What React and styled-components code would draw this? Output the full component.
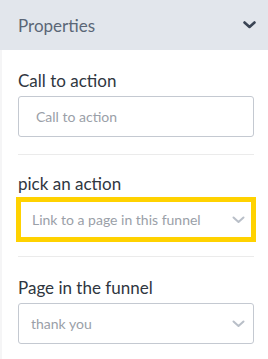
import React from "react";
import styled, { createGlobalStyle } from "styled-components";

const Global = createGlobalStyle`
  html, body { margin: 0; padding: 0; background: #ffffff; }
  body { font-family: Lato, "Noto Sans", sans-serif; }
  * { box-sizing: border-box; }
`;

const Panel = styled.div`
  width: 268px;
  height: 359px;
  display: flex;
  flex-direction: column;
  background: #fff;
  overflow: hidden;
`;

const Header = styled.div`
  height: 50px;
  flex: none;
  background: #e2e6ec;
  display: flex;
  align-items: center;
  justify-content: space-between;
  padding: 0 12px 0 18px;
  color: #5b6677;
  font-size: 17px;
`;

const Body = styled.div`
  flex: 1;
  border-left: 2px solid #f5f5f6;
  padding: 0 14px 0 16px;
  display: flex;
  flex-direction: column;
`;

const Section = styled.div`
  padding: ${(p) => p.$top}px 0 ${(p) => p.$bottom}px;
  border-bottom: ${(p) => (p.$last ? "none" : "1px solid #ebebeb")};
`;

const Label = styled.div`
  color: #2f3640;
  font-size: 17px;
  line-height: 20px;
  margin-bottom: 5px;
`;

const Field = styled.div`
  height: 41px;
  border: 1px solid #c4c9d1;
  border-radius: 3px;
  display: flex;
  align-items: center;
  justify-content: space-between;
  padding: 0 8px 0 ${(p) => p.$pad}px;
  color: #9aa0a8;
  font-size: 14px;
  ${(p) =>
    p.$active &&
    `
    border: 3px solid #ffd200;
    outline: 2px solid #ffd200;
    border-radius: 0;
    padding-left: 11px;
    padding-right: 6px;
  `}
`;

const Chevron = ({ color, w = 13, sw = 2 }) => (
  <svg width={w} height="8" viewBox="0 0 13 8" fill="none">
    <path d="M1.5 1.5 L6.5 6 L11.5 1.5" stroke={color} strokeWidth={sw} strokeLinecap="round" strokeLinejoin="round" />
  </svg>
);

export default function App() {
  return (
    <>
      <Global />
      <Panel>
        <Header>
          <span>Properties</span>
          <Chevron color="#3a4454" sw={2.6} />
        </Header>
        <Body>
          <Section $top={21} $bottom={17}>
            <Label>Call to action</Label>
            <Field $pad={17}>Call to action</Field>
          </Section>
          <Section $top={19} $bottom={16}>
            <Label>pick an action</Label>
            <Field $active>
              <span>Link to a page in this funnel</span>
              <Chevron color="#b9bfc8" />
            </Field>
          </Section>
          <Section $top={21} $bottom={0} $last>
            <Label>Page in the funnel</Label>
            <Field $pad={12}>
              <span>thank you</span>
              <Chevron color="#b9bfc8" />
            </Field>
          </Section>
        </Body>
      </Panel>
    </>
  );
}
